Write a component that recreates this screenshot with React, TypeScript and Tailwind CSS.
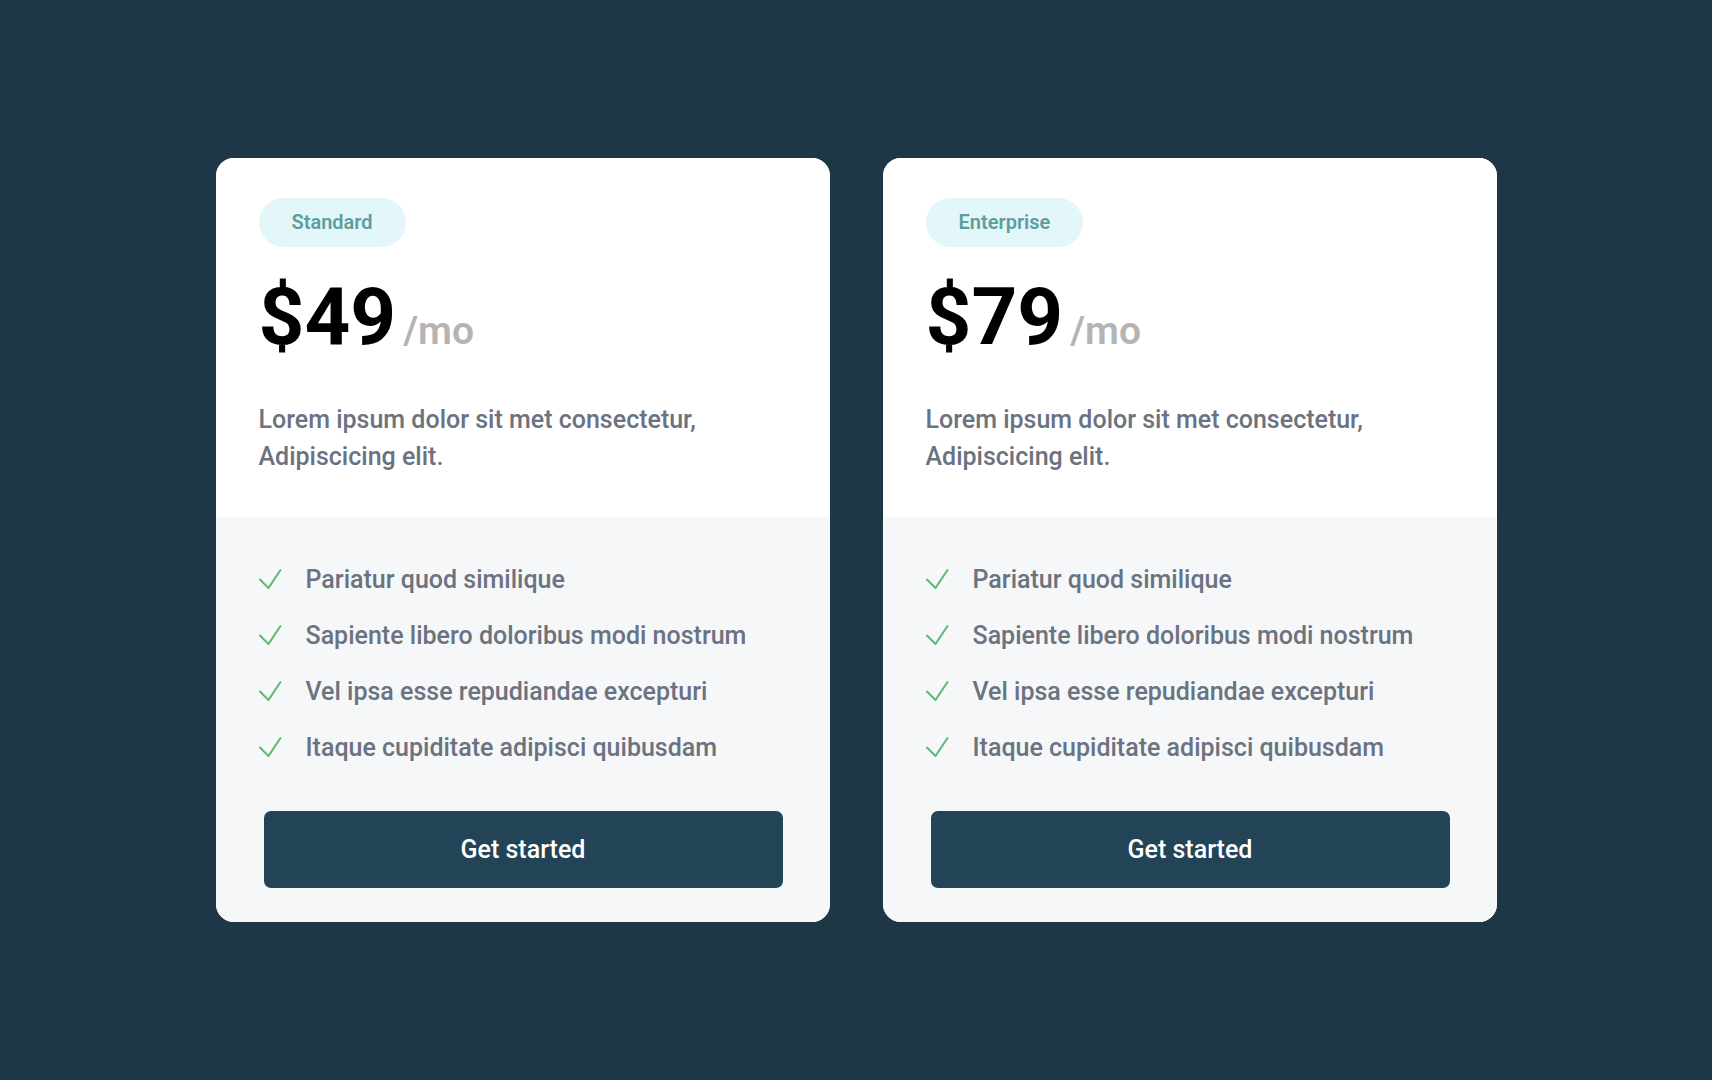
const plans = [
  { name: 'Standard', price: '$49' },
  { name: 'Enterprise', price: '$79' },
];

const features = [
  'Pariatur quod similique',
  'Sapiente libero doloribus modi nostrum',
  'Vel ipsa esse repudiandae excepturi',
  'Itaque cupiditate adipisci quibusdam',
];

function CheckMark() {
  return (
    <svg viewBox="0 0 24 22" className="w-[24px] h-[22px] shrink-0" fill="none">
      <path d="M2 11.5 L10.5 20 L22.5 2" stroke="#5bb872" strokeWidth="2" strokeLinecap="round" strokeLinejoin="round" />
    </svg>
  );
}

function PlanCard({ name, price }: { name: string; price: string }) {
  return (
    <div className="w-[614px] rounded-[18px] overflow-hidden bg-white flex flex-col">
      {/* top */}
      <div className="px-[43px] pt-[40px] pb-[42px] bg-white">
        <span className="inline-flex items-center h-[49px] px-[33px] rounded-full bg-[#e3f6fa] text-[#5b9f9c] text-[20px] font-semibold">
          {name}
        </span>
        <div className="mt-[30px] flex items-baseline">
          <span className="text-[80px] leading-[80px] font-bold text-black">{price}</span>
          <span className="ml-[7px] text-[39px] font-semibold text-[#b4b4b4]">/mo</span>
        </div>
        <p className="mt-[41px] text-[25px] leading-[37px] text-[#6b7280] font-medium">
          Lorem ipsum dolor sit met consectetur,
          <br />
          Adipiscicing elit.
        </p>
      </div>

      {/* features */}
      <div className="bg-[#f5f7f9] px-[42px] pt-[44px] pb-[34px] flex-1">
        <ul className="flex flex-col gap-[20px]">
          {features.map((f) => (
            <li key={f} className="flex items-center h-[36px]">
              <CheckMark />
              <span className="ml-[24px] text-[25px] font-medium text-[#6b7280]">{f}</span>
            </li>
          ))}
        </ul>
        <button className="mt-[46px] ml-[6px] w-[519px] h-[77px] rounded-[7px] bg-[#234457] text-white text-[25px] font-medium">
          Get started
        </button>
      </div>
    </div>
  );
}

export default function App() {
  return (
    <div
      className="min-h-screen w-full bg-[#1e3747] flex items-center justify-center gap-[53px]"
      style={{ fontFamily: 'Roboto, "Liberation Sans", sans-serif' }}
    >
      {plans.map((p) => (
        <PlanCard key={p.name} name={p.name} price={p.price} />
      ))}
    </div>
  );
}
